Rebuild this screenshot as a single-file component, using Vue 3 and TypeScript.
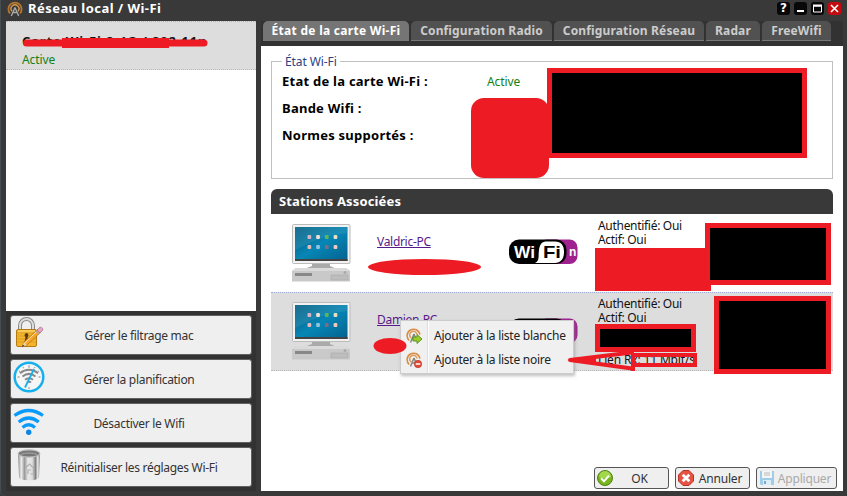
<script setup lang="ts">
interface Station {
  name: string
  lines: string[]
  selected: boolean
}

const tabs: string[] = ['État de la carte Wi-Fi', 'Configuration Radio', 'Configuration Réseau', 'Radar', 'FreeWifi']
const fields: { label: string; value: string }[] = [
  { label: 'Etat de la carte Wi-Fi :', value: 'Active' },
  { label: 'Bande Wifi :', value: '' },
  { label: 'Normes supportés :', value: '' },
]
const stations: Station[] = [
  { name: 'Valdric-PC', lines: ['Authentifié: Oui', 'Actif: Oui'], selected: false },
  { name: 'Damien-PC', lines: ['Authentifié: Oui', 'Actif: Oui', '', 'Lien Tx: 11 Mbit/s', 'Lien Rx: 11 Mbit/s'], selected: true },
]
const actions: { icon: string; label: string }[] = [
  { icon: 'lock', label: 'Gérer le filtrage mac' },
  { icon: 'clock', label: 'Gérer la planification' },
  { icon: 'wifi', label: 'Désactiver le Wifi' },
  { icon: 'bin', label: 'Réinitialiser les réglages Wi-Fi' },
]
const appIcons = [0, 1, 2, 3, 4, 5, 6, 7]
const appColors = ['#d8b0c8', '#f0e0d8', '#58b858', '#e8e0c0', '#e8b8b8', '#8fc4e0', '#7c6c8c', '#f0c8c0']
</script>

<template>
  <div class="window">
    <header class="titlebar">
      <svg class="app-icon" viewBox="0 0 16 16" fill="none">
        <path d="M3 12.5A6.6 6.6 0 1 1 13 12.5" stroke="#b8762c" stroke-width="1.8" />
        <path d="M5 10.3A3.9 3.9 0 1 1 11 10.3" stroke="#d99a50" stroke-width="1.4" />
        <path d="M8 6.5L4.3 15M8 6.5L11.7 15M6 11.5h4" stroke="#aaa" stroke-width="1.4" />
      </svg>
      <h1>Réseau local / Wi-Fi</h1>
      <div class="controls">
        <span class="control">?</span>
        <span class="control"><svg viewBox="0 0 13 13"><path d="M3 9h7" stroke="#fff" stroke-width="2" /></svg></span>
        <span class="control"><svg viewBox="0 0 13 13" fill="none"><path d="M2.5 4v6h8V4z" stroke="#fff" /><path d="M2 3.5h9" stroke="#fff" stroke-width="2" /></svg></span>
        <span class="control close"><svg viewBox="0 0 13 13"><path d="M3 3l7 7M10 3l-7 7" stroke="#fff" stroke-width="1.6" /></svg></span>
      </div>
    </header>

    <div class="body">
      <aside class="side">
        <div class="cards">
          <div class="card">
            <strong>Carte Wi-Fi 2.4G / 802.11n</strong>
            <span class="active">Active</span>
          </div>
        </div>
        <div class="actions">
          <button v-for="a in actions" :key="a.icon" class="action">
            <svg v-if="a.icon === 'lock'" class="action-icon" viewBox="0 0 32 32" fill="none">
              <path d="M7 13V8.5a6.5 6.5 0 0 1 13 0V13" stroke="#888" stroke-width="4" />
              <path d="M7 13V8.5a6.5 6.5 0 0 1 13 0V13" stroke="#ddd" stroke-width="2" />
              <rect x="3.5" y="12.5" width="20" height="17" rx="1.5" fill="#f2b52b" stroke="#b57a10" />
              <path d="M4 16h19M4 19h19M4 22h19M4 25h19" stroke="#dda02a" />
              <path d="M5 14h17" stroke="#ffe08a" />
              <path d="M13.500 16a2.200 2.200 0 0 1 1 4l1 5h-4l1-5a2.200 2.200 0 0 1 1-4" fill="#5a3a10" />
              <path d="M9 30l2-5L25 12l3 3-14 13z" fill="#f8a52c" stroke="#b96a12" stroke-width=".7" />
              <path d="M12 26l13-13" stroke="#ffe2a0" />
              <path d="M9 30l2-5 3 3z" fill="#e8d2ac" /><path d="M9 30l1-2.2 1.3 1.3z" fill="#222" />
              <path d="M24 13l2.5-2.5c2-1 4 1 3 3L27 16z" fill="#e6a4c4" stroke="#9d6480" stroke-width=".6" />
              <path d="M23 14l3 3" stroke="#aaa" stroke-width="1.5" />
            </svg>
            <svg v-else-if="a.icon === 'clock'" class="action-icon" viewBox="0 0 32 32" fill="none">
              <circle cx="16" cy="16" r="14.3" fill="#f6f6f6" stroke="#17b0ee" stroke-width="2.5" />
              <path d="M16 4v3M16 26v2M4.5 16h2M25.5 16h2M10 6l.7 1.2M22 6l-.7 1.2M6 10l1.2.7M26 10l-1.2.7" stroke="#aaa" stroke-width="1.3" />
              <path d="M7 12.2c5.5-4.5 12.500-4.500 18 0M9.500 15.500c4-3.200 9-3.200 13 0M12 18.700c2.600-2 5.400-2 8 0M14 21.500c1.400-.9 2.600-.9 4 0" stroke="#888" stroke-width="2" />
              <path d="M12 26.500L21 8" stroke="#17b0ee" stroke-width="1.8" />
            </svg>
            <svg v-else-if="a.icon === 'wifi'" class="action-icon" viewBox="0 0 32 32" fill="none">
              <path d="M1.500 10.500Q15.700 .5 30 10.500M5.700 17Q15.700 9 25.700 17M9.500 22.500Q15.700 17 22 22.500" stroke="#0a9bfa" stroke-width="3.200" />
              <circle cx="15.700" cy="27.300" r="2.700" fill="#0a86e4" />
            </svg>
            <svg v-else class="action-icon" viewBox="0 0 32 32" fill="none">
              <defs>
                <linearGradient id="steel"><stop offset="0" stop-color="#888" /><stop offset=".15" stop-color="#eee" /><stop offset=".3" stop-color="#999" /><stop offset=".45" stop-color="#e8e8e8" /><stop offset=".65" stop-color="#ddd" /><stop offset=".8" stop-color="#808080" /><stop offset=".9" stop-color="#eee" /><stop offset="1" stop-color="#777" /></linearGradient>
              </defs>
              <path d="M5 4.500L6 28c0 4.500 20 4.500 20 0L27 4.500z" fill="url(#steel)" />
              <ellipse cx="16" cy="4.500" rx="10.800" ry="3.600" fill="#777" stroke="#bbb" stroke-width="1.200" />
              <path d="M8 5.500c4-2 12-2 16 0" stroke="#aaa" />
              <path d="M13 25h-.500v-6l4-4 4 4v6h-3M15 25v-4h3" stroke="#b0b0b0" stroke-width="1.200" />
            </svg>
            <span>{{ a.label }}</span>
          </button>
        </div>
      </aside>

      <main class="main">
        <nav class="tabs">
          <span v-for="(t, i) in tabs" :key="t" class="tab" :class="['tab-' + i, { current: i === 0 }]">{{ t }}</span>
        </nav>
        <section class="panel">
          <div class="status">
            <span class="legend">État Wi-Fi</span>
            <div v-for="f in fields" :key="f.label" class="field">
              <strong>{{ f.label }}</strong><span class="active">{{ f.value }}</span>
            </div>
          </div>
          <h2>Stations Associées</h2>
          <div v-for="s in stations" :key="s.name" class="station" :class="{ selected: s.selected }">
            <svg class="pc" viewBox="0 0 60 60">
              <defs><linearGradient id="screen" x1="0" y1="0" x2="1" y2="1"><stop offset="0" stop-color="#075376" /><stop offset=".5" stop-color="#0786b6" /><stop offset="1" stop-color="#04618d" /></linearGradient></defs>
              <rect x=".5" y=".5" width="57.500" height="39" rx="1" fill="#f2f2f2" stroke="#bbb" />
              <rect x="3" y="3" width="52.500" height="34" fill="url(#screen)" />
              <path d="M3 3h52.500v6Q30 11 3 26z" fill="#3f9fba" opacity=".35" />
              <path d="M3 36h52.500" stroke="#444" stroke-width="2" />
              <rect v-for="n in appIcons" :key="n" :x="15.500 + (n % 4) * 8.700" :y="n < 4 ? 11 : 21" width="3.700" height="4" rx="1" :fill="appColors[n]" />
              <path d="M20 40h18v2l7 3H12l8-3z" fill="#aaa" />
              <path d="M4 44h50l4 3v10.500H0V47z" fill="#c9c9c9" />
              <path d="M4 44h50l4 3H0z" fill="#dadada" />
              <path d="M3 50.500h17" stroke="#888" stroke-width="3" />
              <rect x="39" y="51" width="17" height="5" fill="#bdbdbd" stroke="#aaa" stroke-width=".6" />
              <circle cx="53" cy="48.500" r="1.500" fill="#aaa" />
            </svg>
            <a class="name">{{ s.name }}</a>
            <svg class="logo" viewBox="0 0 69 26">
              <rect x="30" y=".5" width="38.500" height="24.500" rx="8" fill="#9f218f" />
              <rect x="0" y=".5" width="57.500" height="24.500" rx="10" fill="#000" />
              <path d="M26 24c5-2 3-8 4-13 .7-6 3-8.500 8-8.500h8c6 0 9 4 9 10.500S52 24 46 24z" fill="#fff" />
              <template v-if="!s.selected">
                <text x="5" y="18.500" class="logo-text" fill="#fff" textLength="21" lengthAdjust="spacingAndGlyphs">Wi</text>
                <text x="34" y="18.500" class="logo-text" fill="#000" textLength="18" lengthAdjust="spacingAndGlyphs">Fi</text>
                <text x="60" y="17" class="logo-n" fill="#fff">n</text>
              </template>
            </svg>
            <div class="info"><div v-for="(l, i) in s.lines" :key="i" class="line">{{ l }}</div></div>
          </div>
          <footer class="buttons">
            <button class="button ok">
              <svg viewBox="0 0 16 16" fill="none"><circle cx="8" cy="8" r="7.500" fill="#78b51c" stroke="#4d8212" /><path d="M2 7a6 6 0 0 1 12 0Q8 10 2 7" fill="#a4d84c" /><path d="M4 8.300l3 3 5-5.600" stroke="#fff" stroke-width="2" /></svg>
              <span>OK</span>
            </button>
            <button class="button cancel">
              <svg viewBox="0 0 16 16"><path d="M5 .5h6L15.500 5v6L11 15.500H5L.5 11V5z" fill="#e65342" stroke="#b93428" /><path d="M4.700 4.700l6.600 6.600M11.300 4.700l-6.600 6.600" stroke="#fff" stroke-width="2.800" /></svg>
              <span>Annuler</span>
            </button>
            <button class="button apply" disabled>
              <svg viewBox="0 0 16 16"><path d="M1 1h14v14H2l-1-1z" fill="#9fcde9" /><path d="M3 1h10v7H3z" fill="#f5f5f5" /><path d="M5 3h6M5 5h6" stroke="#bbb" /><path d="M4 10h8v5H4z" fill="#ddeef8" /><path d="M5 11h2v3H5z" fill="#79a9c6" /></svg>
              <span>Appliquer</span>
            </button>
          </footer>
        </section>
      </main>
    </div>

    <div class="menu">
      <div v-for="(label, i) in ['Ajouter à la liste blanche', 'Ajouter à la liste noire']" :key="label" class="menu-item">
        <svg viewBox="0 0 16 16" fill="none">
          <path d="M3.200 12.500A6.500 6.500 0 1 1 14 6.500" stroke="#d98b42" stroke-width="1.600" />
          <path d="M5.200 10A3.700 3.700 0 1 1 11 6.500" stroke="#dd9b5c" stroke-width="1.500" />
          <path d="M8 6L4.500 14.500M8 6l2.500 6M6 11h3" stroke="#888" stroke-width="1.500" />
          <path v-if="i === 0" d="M7 9h4V6.500l5 4.500-5 4.500V13H7z" fill="#9ace25" stroke="#4f8d15" stroke-width=".9" />
          <template v-else><circle cx="12" cy="12" r="3.700" fill="#e04a38" stroke="#b83124" stroke-width=".6" /><path d="M9.700 12h4.600" stroke="#fff" stroke-width="1.500" /></template>
        </svg>
        <span>{{ label }}</span>
      </div>
    </div>

    <svg class="marks" viewBox="0 0 847 496" fill="none">
      <path d="M26.500 43H204" stroke="#ed1c24" stroke-width="7" stroke-linecap="round" />
      <path d="M62 43h107" stroke="#ed1c24" stroke-width="10" />
      <rect x="471" y="98" width="78" height="80" rx="13" fill="#ed1c24" />
      <rect x="549.500" y="70.500" width="255" height="85" fill="#000" stroke="#ed1c24" stroke-width="5" />
      <ellipse cx="424.500" cy="267" rx="56.500" ry="8" fill="#ed1c24" />
      <rect x="595" y="248" width="116" height="43" fill="#ed1c24" />
      <rect x="707.500" y="225.500" width="121" height="57" fill="#000" stroke="#ed1c24" stroke-width="5" />
      <rect x="716.500" y="298.500" width="112" height="73" fill="#000" stroke="#ed1c24" stroke-width="5" />
      <ellipse cx="390" cy="346" rx="16.500" ry="8" fill="#ed1c24" />
      <rect x="597.500" y="326.500" width="96" height="23" fill="#000" stroke="#ed1c24" stroke-width="5" />
      <path d="M570 360L632 352.500M570 360L632 368.500" stroke="#ed1c24" stroke-width="4" stroke-linecap="round" />
      <path d="M569 360L596 355.500V364z" fill="#ed1c24" />
      <path d="M633 364v7" stroke="#ed1c24" stroke-width="4" />
      <path d="M633 355h62v10h-62z" stroke="#ed1c24" stroke-width="4" />
    </svg>
  </div>
</template>

<style>
body { background: #3a3a3a; overflow: hidden; }
</style>

<style scoped>
* { box-sizing: border-box; }
.window { position: relative; width: 847px; height: 496px; padding: 0 4px 5px 6px; background: #393939; box-shadow: inset 1px 0 #454e53; border-radius: 0 0 0 5px; font: 12px/14px "Noto Sans", "Open Sans", sans-serif; letter-spacing: -.3px; color: #111; display: flex; flex-direction: column; }
.titlebar { height: 21px; flex: none; display: flex; align-items: flex-start; }
.app-icon { width: 16px; height: 16px; margin: 1px 5px 0 1px; }
h1 { margin: 1px 0 0; font-size: 13px; line-height: 15px; color: #fff; letter-spacing: .45px; }
.controls { display: flex; gap: 4px; margin: 2px 2px 0 auto; }
.control { width: 13px; height: 13px; border-radius: 3px; background: #080808; color: #fff; font: bold 12px/13px "DejaVu Sans", sans-serif; letter-spacing: 0; text-align: center; }
.control svg { display: block; width: 13px; height: 13px; }
.close { background: #c40c10; }
.body { flex: 1; display: flex; gap: 5px; min-height: 0; }
.side { width: 250px; background: #323232; }
.cards { height: 290px; background: #fff; }
.card { height: 49px; padding: 12px 16px 0; background: #ddd; border-top: 1px dotted #a9b5d6; border-bottom: 1px dotted #bbb; display: flex; flex-direction: column; gap: 5px; white-space: nowrap; }
.card strong { font-size: 13px; letter-spacing: .85px; }
.active { color: #148016; letter-spacing: -.1px; }
.actions { padding: 4px 4px 0; display: flex; flex-direction: column; gap: 4px; }
.action { height: 40px; padding: 0; border: 1px solid #606060; border-radius: 3px; background: #efefef; font: inherit; letter-spacing: inherit; color: #333; display: flex; align-items: center; }
.action-icon { width: 32px; height: 32px; margin: -4px 0 0 2px; flex: none; }
.action span { flex: 1; text-align: center; padding: 2px 18px 0 0; }
.main { flex: 1; display: flex; flex-direction: column; background: #323232; }
.tabs { display: flex; gap: 2px; padding-left: 2px; height: 25px; }
.tab { height: 20px; border-radius: 5px 5px 0 0; background: #515151; border-bottom: 1px solid #777; color: #ccc; font-weight: bold; line-height: 19px; text-align: center; white-space: nowrap; letter-spacing: .15px; }
.tab.current { background: #757575; color: #fff; letter-spacing: .28px; }
.tab-0 { width: 146px; }
.tab-1 { width: 141px; }
.tab-2 { width: 150px; }
.tab-3 { width: 54px; }
.tab-4 { width: 69px; }
.panel { flex: 1; background: #fff; padding: 15px 10px 0; display: flex; flex-direction: column; }
.status { height: 118px; flex: none; border: 1px solid #c0c0c0; padding: 0 10px; }
.legend { display: block; width: 58px; margin: -7px 0 6px; padding-left: 3px; background: #fff; color: #2b4383; white-space: nowrap; letter-spacing: -.1px; }
.field { height: 27px; line-height: 14px; display: flex; color: #000; }
.field strong { width: 205px; margin-top: -1px; font-size: 13px; letter-spacing: .25px; }
h2 { margin: 10px 0 0; height: 25px; flex: none; padding-left: 8px; border-radius: 6px 6px 0 0; background: #393939; color: #fff; font-size: 13px; letter-spacing: .15px; line-height: 25px; }
.station { height: 78px; flex: none; padding: 4px 0 0 21px; display: grid; grid-template-columns: 85px 132px 89px 1fr; align-items: start; }
.selected { height: 79px; background: #ddd; border-top: 1px dotted #a0aed8; border-bottom: 1px dotted #bbb; }
.pc { width: 60px; height: 60px; margin-top: 6px; }
.selected .pc { margin-top: 5px; }
.name { justify-self: start; margin-top: 17px; color: #551a8b; text-decoration: underline; }
.selected .name { margin-top: 16px; }
.logo { width: 69px; height: 26px; margin-top: 21px; letter-spacing: 0; }
.logo-text { font: bold 17px "Liberation Sans", sans-serif; }
.logo-n { font: bold 12px "Liberation Sans", sans-serif; }
.info { padding-top: 1px; white-space: nowrap; }
.selected .info { padding-top: 0; }
.line { height: 14px; }
.selected .line:last-child { letter-spacing: -.15px; }
.buttons { margin: auto -4px 2px 0; display: flex; justify-content: flex-end; gap: 6px; }
.button { width: 75px; height: 22px; padding: 0 0 0 2px; border: 1px solid #555; border-radius: 3px; background: #efefef; color: #333; font: inherit; letter-spacing: -.2px; display: flex; align-items: center; }
.button svg { width: 16px; height: 16px; flex: none; }
.button span { flex: 1; text-align: center; padding: 1px 2px 0 0; }
.apply { width: 81px; }
.apply span { color: #aaa; }
.menu { position: absolute; left: 400px; top: 320px; width: 174px; height: 54px; padding: 3px 2px; border: 1px solid #ccc; background: linear-gradient(90deg, #f0f0f0 26px, #ddd 26px, #ddd 27px, #fff 27px, #fff 28px, #f0f0f0 28px); box-shadow: 1px 2px 3px #8888; }
.menu-item { height: 24px; display: flex; align-items: center; gap: 12px; letter-spacing: -.25px; color: #222; white-space: nowrap; }
.menu-item svg { width: 16px; height: 16px; margin-left: 3px; flex: none; }
.marks { position: absolute; inset: 0; width: 847px; height: 496px; pointer-events: none; }
</style>
